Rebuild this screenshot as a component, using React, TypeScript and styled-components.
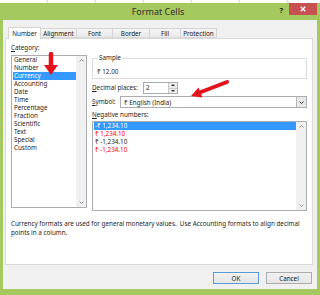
import React from 'react'
import styled, { createGlobalStyle } from 'styled-components'

const GlobalStyle = createGlobalStyle`
  html, body {
    margin: 0;
    padding: 0;
  }
  body {
    width: 320px;
    height: 295px;
    overflow: hidden;
    background: #fff;
    font-family: "Noto Sans", "Open Sans", sans-serif;
    color: #1e1e1e;
  }
`

const categories = [
  'General', 'Number', 'Currency', 'Accounting', 'Date', 'Time',
  'Percentage', 'Fraction', 'Scientific', 'Text', 'Special', 'Custom'
]

const negatives = [
  { text: '-₹ 1,234.10', red: false },
  { text: '₹ 1,234.10', red: true },
  { text: '₹ -1,234.10', red: false },
  { text: '₹ -1,234.10', red: true }
]

const tabs = [
  { label: 'Number', width: 33 },
  { label: 'Alignment', width: 37 },
  { label: 'Font', width: 37 },
  { label: 'Border', width: 38 },
  { label: 'Fill', width: 32 },
  { label: 'Protection', width: 37 }
]

const Chevron = ({ up }: { up?: boolean }) => (
  <svg width='5' height='3' viewBox='0 0 5 3'>
    <path d={up ? 'M0.5 2.5 L2.5 0.5 L4.5 2.5' : 'M0.5 0.5 L2.5 2.5 L4.5 0.5'} fill='none' stroke='#8a8a8a' strokeWidth='0.9' />
  </svg>
)

const Scroll = () => (
  <ScrollTrack>
    <Chevron up />
    <Chevron />
  </ScrollTrack>
)

export default function App() {
  return (
    <Backdrop>
      <GlobalStyle />
      <Window>
        <TitleBar>
          <Title>Format Cells</Title>
          <Controls>
            <Help>?</Help>
            <Close aria-label='Close'>
              <svg width='6' height='6' viewBox='0 0 6 6'>
                <path d='M0.8 0.8 L5.2 5.2 M5.2 0.8 L0.8 5.2' stroke='#fff' strokeWidth='1.3' />
              </svg>
            </Close>
          </Controls>
        </TitleBar>

        <Client>
          <TabStrip>
            {tabs.map((t, i) => (
              <Tab key={t.label} $width={t.width} $active={i === 0}>
                {t.label}
              </Tab>
            ))}
          </TabStrip>

          <Page>
            <Columns>
              <LeftCol>
                <Label><u>C</u>ategory:</Label>
                <ListBox $height={153}>
                  <Items>
                    {categories.map(c => (
                      <Item key={c} $selected={c === 'Currency'}>{c}</Item>
                    ))}
                  </Items>
                  <Scroll />
                </ListBox>
              </LeftCol>

              <RightCol>
                <Sample>
                  <Legend>Sample</Legend>
                  <SampleValue>₹ 12.00</SampleValue>
                </Sample>

                <FieldRow $gap={3}>
                  <FieldLabel $width={51}><u>D</u>ecimal places:</FieldLabel>
                  <SpinBox>
                    <SpinValue>2</SpinValue>
                    <SpinButtons>
                      <SpinButton>
                        <svg width='4' height='2' viewBox='0 0 4 2'><path d='M0 2 L2 0 L4 2 Z' fill='#333' /></svg>
                      </SpinButton>
                      <SpinButton>
                        <svg width='4' height='2' viewBox='0 0 4 2'><path d='M0 0 L2 2 L4 0 Z' fill='#333' /></svg>
                      </SpinButton>
                    </SpinButtons>
                  </SpinBox>
                </FieldRow>

                <FieldRow $gap={2}>
                  <FieldLabel $width={28}><u>S</u>ymbol:</FieldLabel>
                  <Combo>
                    <ComboText>₹ English (India)</ComboText>
                    <ComboButton>
                      <svg width='5' height='3' viewBox='0 0 5 3'>
                        <path d='M0.5 0.5 L2.5 2.5 L4.5 0.5' fill='none' stroke='#333' strokeWidth='1' />
                      </svg>
                    </ComboButton>
                  </Combo>
                </FieldRow>

                <NegLabel><u>N</u>egative numbers:</NegLabel>
                <ListBox $height={90}>
                  <Items>
                    {negatives.map((n, i) => (
                      <Item key={i} $selected={i === 0} $red={n.red}>{n.text}</Item>
                    ))}
                  </Items>
                  <Scroll />
                </ListBox>
              </RightCol>
            </Columns>

            <Description>
              Currency formats are used for general monetary values.&nbsp; Use Accounting formats to align decimal points in a column.
            </Description>
          </Page>

          <Footer>
            <Button $default>OK</Button>
            <Button>Cancel</Button>
          </Footer>
        </Client>

        <Arrows width='320' height='295' viewBox='0 0 320 295'>
          <line x1='51' y1='54' x2='51' y2='66' stroke='#e3121b' strokeWidth='4.5' strokeLinecap='round' />
          <polygon points='44,65 58,65 51,75' fill='#e3121b' />
          <line x1='227' y1='82' x2='201' y2='92' stroke='#e3121b' strokeWidth='4' strokeLinecap='round' />
          <polygon points='191,96 198.5,87.5 202.5,97.5' fill='#e3121b' />
        </Arrows>
      </Window>
    </Backdrop>
  )
}

const Backdrop = styled.div`
  width: 320px;
  height: 295px;
  padding-top: 3px;
  box-sizing: border-box;
  background: repeating-linear-gradient(90deg, #fff 0 47px, #d4d4d4 47px 48px);
`

const Window = styled.div`
  position: relative;
  height: 292px;
  box-sizing: border-box;
  padding: 0 3px 6px 3px;
  background: #a6c95f;
  display: flex;
  flex-direction: column;
`

const TitleBar = styled.div`
  height: 17px;
  display: flex;
  align-items: center;
  justify-content: center;
  position: relative;
`

const Title = styled.div`
  font-size: 9px;
  color: #2e2e2e;
  margin-left: -4px;
`

const Controls = styled.div`
  position: absolute;
  top: 0;
  right: 0;
  display: flex;
  align-items: flex-start;
`

const Help = styled.span`
  font-size: 7.5px;
  font-weight: bold;
  color: #222;
  margin: 2px 6px 0 0;
`

const Close = styled.button`
  width: 28px;
  height: 12px;
  border: 0;
  padding: 0;
  background: #c75050;
  display: flex;
  align-items: center;
  justify-content: center;
`

const Client = styled.div`
  flex: 1;
  background: #f0f0f0;
  padding: 7px 4px 0 2px;
  display: flex;
  flex-direction: column;
`

const TabStrip = styled.div`
  display: flex;
  align-items: flex-start;
  height: 11px;
  padding-left: 3px;
  position: relative;
  z-index: 1;
`

const Tab = styled.div<{ $width: number; $active?: boolean }>`
  width: ${p => p.$width}px;
  height: ${p => (p.$active ? 12 : 10)}px;
  margin-top: ${p => (p.$active ? 0 : 1)}px;
  margin-right: -1px;
  box-sizing: border-box;
  border: 1px solid #d4d4d4;
  border-bottom: ${p => (p.$active ? 'none' : '1px solid #d9d9d9')};
  background: ${p => (p.$active ? '#fff' : 'linear-gradient(#f4f4f4, #e9e9e9)')};
  font-size: 6.3px;
  color: #222;
  display: flex;
  align-items: center;
  justify-content: center;
  padding-bottom: ${p => (p.$active ? 1 : 0)}px;
`

const Page = styled.div`
  height: 227px;
  box-sizing: border-box;
  border: 1px solid #d9d9d9;
  background: #fff;
  padding: 5px 5px 0 5px;
`

const Columns = styled.div`
  display: grid;
  grid-template-columns: 76px 215px;
  column-gap: 5px;
  align-items: start;
`

const LeftCol = styled.div`
  display: flex;
  flex-direction: column;
`

const RightCol = styled.div`
  display: flex;
  flex-direction: column;
`

const Label = styled.div`
  font-size: 6.3px;
  line-height: 8px;
  margin-bottom: 3px;
`

const ListBox = styled.div<{ $height: number }>`
  height: ${p => p.$height}px;
  box-sizing: border-box;
  border: 1px solid #abadb3;
  display: flex;
`

const Items = styled.div`
  flex: 1;
  padding-left: 1px;
`

const Item = styled.div<{ $selected?: boolean; $red?: boolean }>`
  height: 8px;
  line-height: 8px;
  font-size: 6.3px;
  padding-left: 1px;
  background: ${p => (p.$selected ? '#3399ff' : 'transparent')};
  color: ${p => (p.$selected ? '#fff' : p.$red ? '#ff0000' : '#1e1e1e')};
  white-space: nowrap;
`

const ScrollTrack = styled.div`
  width: 10px;
  background: #f0f0f0;
  display: flex;
  flex-direction: column;
  align-items: center;
  justify-content: space-between;
  padding: 3px 0;
`

const Sample = styled.fieldset`
  margin: 10px 0 0 0;
  padding: 6px 3px 2px 4px;
  border: 1px solid #dcdcdc;
  min-width: 0;
`

const Legend = styled.legend`
  font-size: 6.3px;
  line-height: 8px;
  padding: 0 1px;
  margin-left: 1px;
  color: #1e1e1e;
`

const SampleValue = styled.div`
  font-size: 6.3px;
  line-height: 8px;
`

const FieldRow = styled.div<{ $gap: number }>`
  display: flex;
  align-items: center;
  height: 12px;
  margin-top: ${p => p.$gap}px;
`

const FieldLabel = styled.div<{ $width: number }>`
  width: ${p => p.$width}px;
  font-size: 6.3px;
  line-height: 8px;
  flex-shrink: 0;
`

const SpinBox = styled.div`
  width: 35px;
  height: 12px;
  box-sizing: border-box;
  border: 1px solid #abadb3;
  display: flex;
`

const SpinValue = styled.div`
  flex: 1;
  font-size: 6.3px;
  line-height: 10px;
  padding-left: 2px;
`

const SpinButtons = styled.div`
  width: 8px;
  display: flex;
  flex-direction: column;
  border-left: 1px solid #c8c8c8;
`

const SpinButton = styled.div`
  flex: 1;
  display: flex;
  align-items: center;
  justify-content: center;
  background: #ececec;
  & + & {
    border-top: 1px solid #c8c8c8;
  }
`

const Combo = styled.div`
  flex: 1;
  height: 12px;
  box-sizing: border-box;
  border: 1px solid #abadb3;
  display: flex;
  align-items: center;
`

const ComboText = styled.div`
  flex: 1;
  font-size: 6.3px;
  padding-left: 3px;
  white-space: nowrap;
`

const ComboButton = styled.div`
  width: 10px;
  height: 100%;
  box-sizing: border-box;
  border-left: 1px solid #b8b8b8;
  background: #e8e8e8;
  display: flex;
  align-items: center;
  justify-content: center;
`

const NegLabel = styled.div`
  font-size: 6.3px;
  line-height: 8px;
  margin: 3px 0 2px 0;
`

const Description = styled.p`
  margin: 8px 0 0 0;
  width: 296px;
  font-size: 6.3px;
  line-height: 9px;
`

const Footer = styled.div`
  flex: 1;
  display: flex;
  justify-content: flex-end;
  align-items: flex-start;
  gap: 7px;
  padding: 7px 1px 0 0;
`

const Button = styled.button<{ $default?: boolean }>`
  width: 46px;
  height: 12px;
  box-sizing: border-box;
  padding: 0;
  border: 1px solid ${p => (p.$default ? '#5b9bd5' : '#adadad')};
  background: linear-gradient(#f2f2f2, #e5e5e5);
  font-family: "Noto Sans", "Open Sans", sans-serif;
  font-size: 6.3px;
  color: #222;
`

const Arrows = styled.svg`
  position: absolute;
  left: 0;
  top: -3px;
  pointer-events: none;
`
